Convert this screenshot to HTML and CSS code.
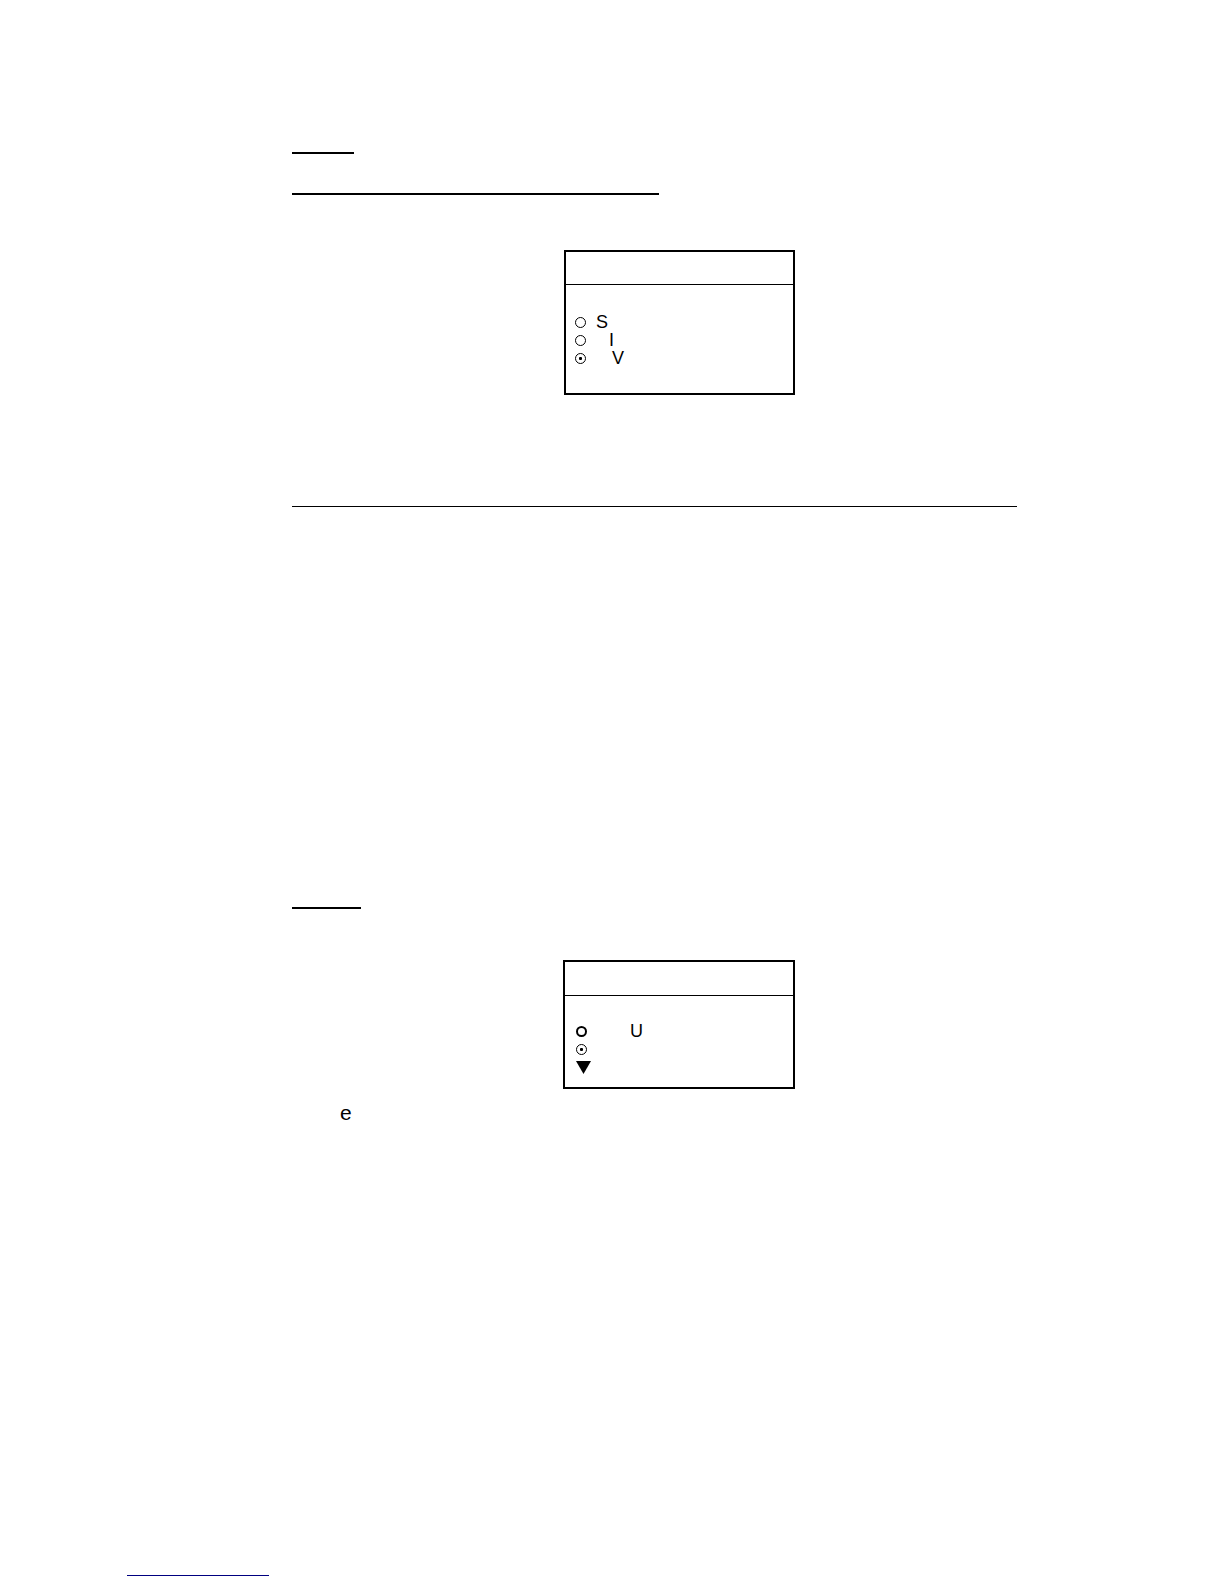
FILE: index.html
```html
<!DOCTYPE html>
<html lang="en">
<head>
<meta charset="utf-8">
<title>Display settings</title>
<link rel="stylesheet" href="styles.css">
</head>
<body>
<main class="page">
  <hr class="rule rule-short">
  <hr class="rule rule-long">
  <section class="panel panel-tall">
    <div class="panel-head"></div>
    <div class="options">
      <label class="option"><input class="radio" type="radio" name="first"><span>S</span></label>
      <label class="option"><input class="radio" type="radio" name="first"><span class="indent-1">I</span></label>
      <label class="option"><input class="radio" type="radio" name="first" checked><span class="indent-2">V</span></label>
    </div>
  </section>
  <hr class="divider">
  <hr class="rule rule-medium">
  <section class="panel panel-low">
    <div class="panel-head"></div>
    <div class="options">
      <label class="option"><input class="radio radio-bold" type="radio" name="second"><span class="indent-3">U</span></label>
      <label class="option"><input class="radio" type="radio" name="second" aria-label="Second option" checked></label>
      <button class="more" type="button" aria-label="More options"><svg width="15" height="13" viewBox="0 0 15 13"><path d="M0 0H15L7.5 13Z"/></svg></button>
    </div>
  </section>
  <p class="note">e</p>
</main>
<footer class="footer"><a class="footer-link" href="#" aria-label="Website"></a></footer>
</body>
</html>
```
FILE: styles.css
```css
* {
  box-sizing: border-box;
}

body {
  display: flex;
  flex-direction: column;
  min-height: 100vh;
  margin: 0;
  background: #fff;
  color: #000;
  font: 18px/18px "Liberation Sans", Arial, sans-serif;
}

.page {
  padding: 152px 207px 0 292px;
}

.rule,
.divider {
  height: 2px;
  margin: 0;
  border: 0;
  background: #000;
}

.rule-short {
  width: 62px;
}

.rule-long {
  width: 367px;
  margin-top: 39px;
}

.rule-medium {
  width: 69px;
}

.divider {
  height: 1px;
  margin: 111px 0 400px;
}

.panel {
  width: 231px;
  margin-left: 272px;
  border: 2px solid #000;
}

.panel-tall {
  min-height: 145px;
  margin-top: 55px;
}

.panel-low {
  width: 232px;
  min-height: 129px;
  margin-top: 51px;
  margin-left: 271px;
}

.panel-head {
  height: 33px;
  border-bottom: 1px solid #000;
}

.panel-low .panel-head {
  height: 34px;
}

.options {
  display: flex;
  flex-direction: column;
  padding: 28px 9px 0;
}

.panel-low .options {
  padding: 26px 11px 0;
}

.option {
  display: flex;
  align-items: center;
  gap: 10px;
  height: 18px;
}

.radio {
  display: grid;
  place-content: center;
  appearance: none;
  width: 11px;
  height: 11px;
  margin: 0;
  border: 1px solid #000;
  border-radius: 50%;
}

.radio:checked::before {
  content: "";
  width: 3px;
  height: 3px;
  border-radius: 1px;
  background: #000;
}

.radio-bold {
  border-width: 2px;
}

.indent-1 {
  padding-left: 13px;
}

.indent-2 {
  padding-left: 16px;
}

.indent-3 {
  padding-left: 33px;
}

.more {
  display: flex;
  align-items: center;
  width: 15px;
  height: 18px;
  padding: 0;
  border: 0;
  background: none;
}

.note {
  margin: 12px 0 0;
  padding-left: 48px;
  font-size: 21px;
  line-height: 24px;
}

.footer {
  display: flex;
  margin-top: auto;
  padding: 0 127px 8px;
}

.footer-link {
  width: 142px;
  height: 18px;
  border-bottom: 1px solid #000080;
}
```
